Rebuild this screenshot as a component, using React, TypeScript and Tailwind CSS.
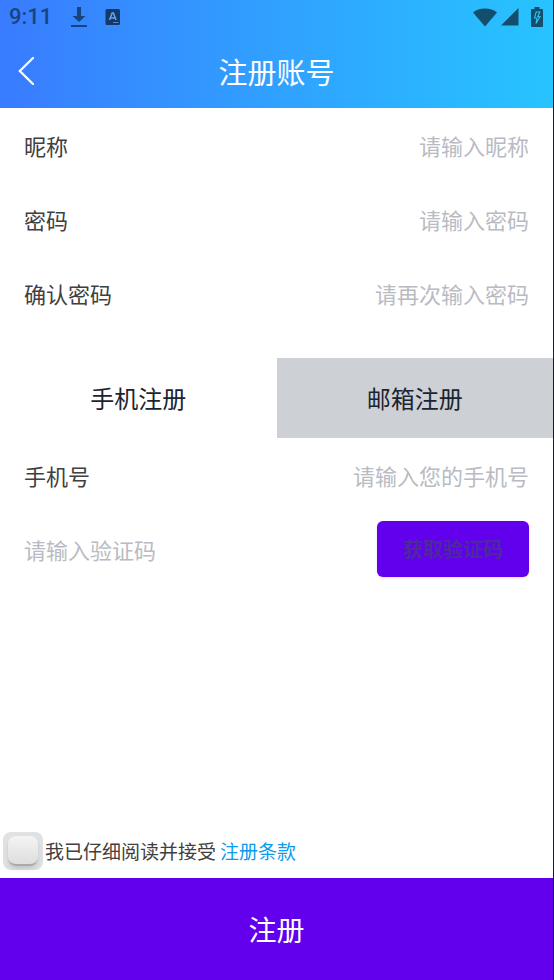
import React, { useState } from 'react';

interface FieldProps {
  id: string;
  label: string;
  placeholder: string;
  type?: string;
}

const Field: React.FC<FieldProps> = ({ id, label, placeholder, type = 'text' }) => (
  <div className="flex h-[74px] items-center gap-4 px-6 text-[22px]">
    <label htmlFor={id} className="shrink-0 text-[#404040]">
      {label}
    </label>
    <input
      id={id}
      type={type}
      placeholder={placeholder}
      className="min-w-0 flex-1 bg-transparent text-right outline-none placeholder:text-[#b9bbc3]"
    />
  </div>
);

const StatusBar: React.FC = () => (
  <div className="flex h-[34px] items-center justify-between pl-[9px] pr-[10px]">
    <div className="flex items-center">
      <span className="text-[22px] leading-none font-medium text-[#194480] font-['Roboto',sans-serif]">9:11</span>
      <svg width="16" height="22" viewBox="0 0 16 22" className="ml-[19px] text-[#17447f]" fill="currentColor">
        <path d="M6 1h4v9h4.500L8 16 1.500 10H6z" />
        <path d="M0 19h16v2H0z" />
      </svg>
      <svg width="16" height="16" viewBox="0 0 16 16" className="ml-[18px]">
        <rect x="0.500" width="14.500" height="16" rx="1.500" fill="#153a68" />
        <path d="M4.500 11 7.200 4h1.200L11 11M5.500 9h4.600" fill="none" stroke="#5fa4ee" strokeWidth="1.600" />
        <path d="M8 13.500h5.500" stroke="#5488c4" strokeWidth="1" />
      </svg>
    </div>
    <div className="flex items-center text-[#134e6c]">
      <svg width="24" height="19" viewBox="0 0 24 19" fill="currentColor">
        <path d="M12 18.500 0 4.500C3 1.800 7 .5 12 .5s9 1.300 12 4z" />
      </svg>
      <svg width="18" height="18" viewBox="0 0 18 18" className="ml-1" fill="currentColor">
        <path d="M17.500 0v17.500H0z" />
      </svg>
      <svg width="12" height="20" viewBox="0 0 12 20" className="ml-3">
        <path
          d="M3.500 0h5v2H11q1 0 1 1v16q0 1-1 1H1q-1 0-1-1V3q0-1 1-1h2.500z"
          fill="#134e6c"
        />
        <path d="M8.800 5H5.200L3.500 11H6l-1 5.500L9 9.500H6.800z" fill="#134e6c" stroke="#32c5ef" strokeWidth="1.100" />
      </svg>
    </div>
  </div>
);

const App: React.FC = () => {
  const [tab, setTab] = useState<'phone' | 'email'>('phone');

  return (
    <div className="flex min-h-screen flex-col border-r border-[#1b1c2b] bg-white font-['Noto_Sans_CJK_SC',sans-serif]">
      <header className="bg-linear-to-r from-[#397bff] to-[#27c4ff]">
        <StatusBar />
        <div className="grid h-[74px] grid-cols-[56px_1fr_56px] items-center">
          <button type="button" aria-label="返回" className="flex h-full items-center pl-[18px] text-white">
            <svg width="16" height="28" viewBox="0 0 16 28" fill="none" stroke="currentColor" strokeWidth="2.200">
              <path d="M15 1 1.800 14 15 27" strokeLinecap="round" />
            </svg>
          </button>
          <h1 className="text-center text-[29px] leading-10 text-white">注册账号</h1>
        </div>
      </header>

      <main className="flex flex-1 flex-col">
        <Field id="nickname" label="昵称" placeholder="请输入昵称" />
        <Field id="password" label="密码" placeholder="请输入密码" type="password" />
        <Field id="confirm" label="确认密码" placeholder="请再次输入密码" type="password" />

        <div className="mt-7 grid h-20 grid-cols-2 text-2xl text-[#1b2430]">
          <button
            type="button"
            onClick={() => setTab('phone')}
            className={tab === 'phone' ? 'bg-white' : 'bg-[#cdd0d5]'}
          >
            手机注册
          </button>
          <button
            type="button"
            onClick={() => setTab('email')}
            className={tab === 'email' ? 'bg-white' : 'bg-[#cdd0d5]'}
          >
            邮箱注册
          </button>
        </div>

        {tab === 'phone' ? (
          <Field id="phone" label="手机号" placeholder="请输入您的手机号" type="tel" />
        ) : (
          <Field id="email" label="邮箱" placeholder="请输入您的邮箱" type="email" />
        )}

        <div className="flex h-[74px] items-center gap-4 px-6 text-[22px]">
          <input
            type="text"
            aria-label="验证码"
            placeholder="请输入验证码"
            className="min-w-0 flex-1 bg-transparent outline-none placeholder:text-[#b9bbc3]"
          />
          <button
            type="button"
            className="h-14 rounded-md bg-[#6200ee] px-[26px] text-xl font-bold text-[#4c2a9e] shadow-sm"
          >
            获取验证码
          </button>
        </div>

        <div className="mt-auto flex items-center pb-2 pl-[3px] text-[19px] leading-7">
          <span className="flex h-[38px] w-10 items-center justify-center rounded-lg bg-[#dfe1e2]">
            <input
              id="agree"
              type="checkbox"
              className="h-[30px] w-[30px] appearance-none rounded-lg border-b-2 border-[#aaaaaa] bg-linear-to-b from-[#f4f4f4] to-[#dedede] shadow-md checked:from-[#6200ee] checked:to-[#6200ee]"
            />
          </span>
          <label htmlFor="agree" className="ml-0.5 text-[#404040]">
            我已仔细阅读并接受
          </label>
          <a href="#terms" className="ml-1 text-[#0a9bed]">
            注册条款
          </a>
        </div>
      </main>

      <button type="submit" className="h-[102px] bg-[#6200ee] text-[28px] text-white">
        注册
      </button>
    </div>
  );
};

export default App;
